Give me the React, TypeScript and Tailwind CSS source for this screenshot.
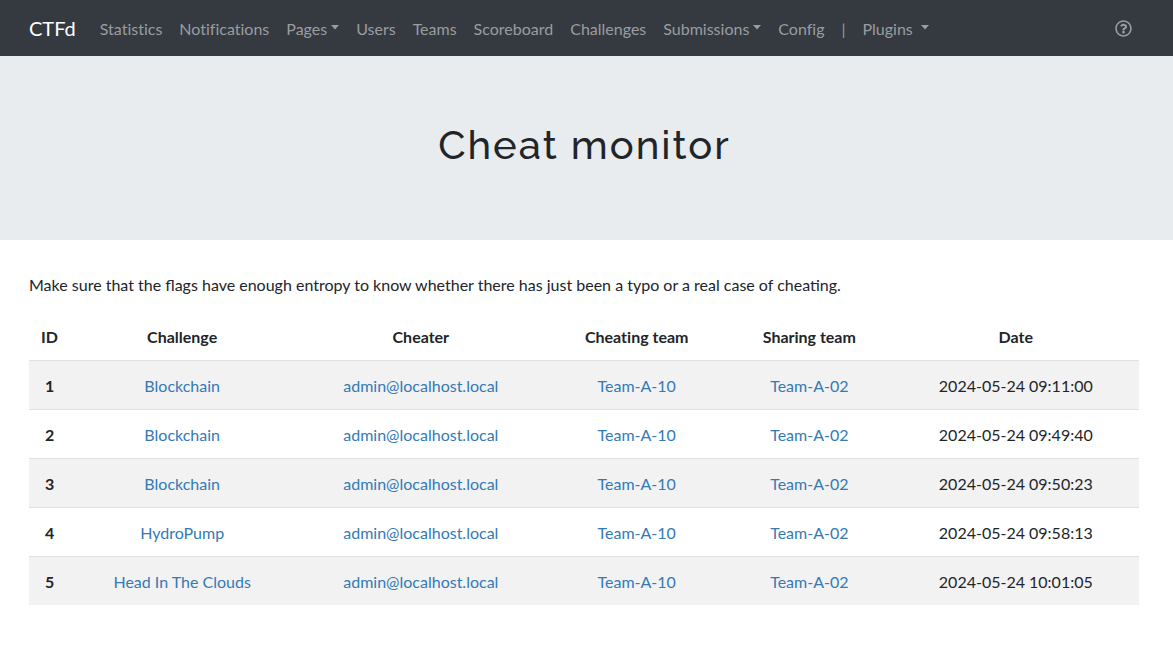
type NavEntry = { label: string; caret?: boolean };

const navItems: NavEntry[] = [
  { label: 'Statistics' },
  { label: 'Notifications' },
  { label: 'Pages', caret: true },
  { label: 'Users' },
  { label: 'Teams' },
  { label: 'Scoreboard' },
  { label: 'Challenges' },
  { label: 'Submissions', caret: true },
  { label: 'Config' },
];

const rows = [
  { id: 1, challenge: 'Blockchain', date: '2024-05-24 09:11:00' },
  { id: 2, challenge: 'Blockchain', date: '2024-05-24 09:49:40' },
  { id: 3, challenge: 'Blockchain', date: '2024-05-24 09:50:23' },
  { id: 4, challenge: 'HydroPump', date: '2024-05-24 09:58:13' },
  { id: 5, challenge: 'Head In The Clouds', date: '2024-05-24 10:01:05' },
].map((row) => ({
  ...row,
  cheater: 'admin@localhost.local',
  cheatingTeam: 'Team-A-10',
  sharingTeam: 'Team-A-02',
}));

const columns = [
  { label: 'ID', width: 'w-[3.7%]' },
  { label: 'Challenge', width: 'w-[20.2%]' },
  { label: 'Cheater', width: 'w-[22.8%]' },
  { label: 'Cheating team', width: 'w-[16.1%]' },
  { label: 'Sharing team', width: 'w-[15%]' },
  { label: 'Date', width: 'w-[22.2%]' },
];

const cell = 'px-1 pt-[13px] pb-[11px]';

function Caret() {
  return (
    <svg width="8" height="5" viewBox="0 0 8 5" className="mb-[3px] fill-current" aria-hidden="true">
      <path d="M0 0h8L4 4.5z" />
    </svg>
  );
}

function NavItem({ label, caret, gap = 'gap-1' }: NavEntry & { gap?: string }) {
  const look = `flex items-center px-2 pt-[9px] pb-[7px] text-[#9a9da0] hover:text-white ${gap}`;
  return (
    <li>
      {caret ? (
        <button type="button" className={look} aria-haspopup="menu">
          {label}
          <Caret />
        </button>
      ) : (
        <a href="#" className={look}>
          {label}
        </a>
      )}
    </li>
  );
}

function CellLink({ children }: { children: string }) {
  return (
    <a href="#" className="text-[#337ab7] hover:underline">
      {children}
    </a>
  );
}

export default function App() {
  return (
    <div className="bg-white font-[Lato,sans-serif] text-base text-[#212529]">
      <nav className="flex items-center bg-[#343a40] px-[29px] py-2">
        <a href="#" className="mr-4 text-xl text-white">
          CTFd
        </a>
        <ul className="flex flex-1 items-center gap-px [font-variant-ligatures:none]">
          {navItems.map((item) => (
            <NavItem key={item.label} {...item} />
          ))}
          <li className="px-2 pt-[9px] pb-[7px] text-[#9a9da0]">|</li>
          <NavItem label="Plugins" caret gap="gap-2" />
        </ul>
        <a href="#" aria-label="Help" className="px-3 py-2 text-[#9a9da0]">
          <svg width="17" height="17" viewBox="0 0 512 512" className="fill-current" aria-hidden="true">
            <path d="M256 8C119 8 8 119 8 256s111 248 248 248 248-111 248-248S393 8 256 8zm0 448c-110.500 0-200-89.400-200-200 0-110.500 89.500-200 200-200 110.500 0 200 89.500 200 200 0 110.500-89.400 200-200 200zm107.200-255.200c0 67.100-72.400 68.100-72.400 92.900V300c0 6.600-5.400 12-12 12h-45.600c-6.600 0-12-5.400-12-12v-8.700c0-35.700 27.100-50 47.600-61.500 17.600-9.800 28.300-16.500 28.300-29.600 0-17.200-22-28.700-39.800-28.700-23.200 0-33.900 11-48.900 30-4.100 5.100-11.500 6.100-16.700 2.100l-27.800-21.100c-5.100-3.900-6.300-11.100-2.600-16.400C184.800 131.500 214.900 112 261.800 112c49.100 0 101.500 38.300 101.500 88.800zM298 368c0 23.200-18.800 42-42 42s-42-18.800-42-42 18.800-42 42-42 42 18.800 42 42z" />
          </svg>
        </a>
      </nav>

      <header className="bg-[#e9ecef] pt-[65px] pr-5 pb-[71px] pl-4 text-center">
        <h1 className="font-[Raleway,Lato,sans-serif] text-[40px] leading-12 font-medium tracking-[2px]">
          Cheat monitor
        </h1>
      </header>

      <main className="pt-[33px] pr-[34px] pb-12 pl-[29px]">
        <p>
          Make sure that the flags have enough entropy to know whether there has just been a typo or a real case of
          cheating.
        </p>
        <table className="mt-[15px] w-full table-fixed text-center">
          <thead className="[font-variant-ligatures:none]">
            <tr>
              {columns.map(({ label, width }) => (
                <th key={label} scope="col" className={`font-bold ${cell} ${width}`}>
                  {label}
                </th>
              ))}
            </tr>
          </thead>
          <tbody>
            {rows.map((row) => (
              <tr key={row.id} className="border-t border-[#dee2e6] odd:bg-[#f2f2f2]">
                <th scope="row" className={`font-bold ${cell}`}>
                  {row.id}
                </th>
                <td className={cell}>
                  <CellLink>{row.challenge}</CellLink>
                </td>
                <td className={cell}>
                  <CellLink>{row.cheater}</CellLink>
                </td>
                <td className={cell}>
                  <CellLink>{row.cheatingTeam}</CellLink>
                </td>
                <td className={cell}>
                  <CellLink>{row.sharingTeam}</CellLink>
                </td>
                <td className={cell}>{row.date}</td>
              </tr>
            ))}
          </tbody>
        </table>
      </main>
    </div>
  );
}
